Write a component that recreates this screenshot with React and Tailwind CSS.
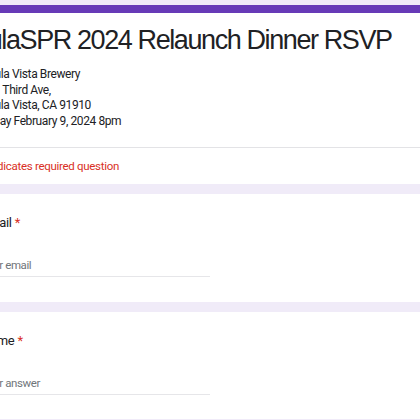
import React from 'react';

const roboto = { fontFamily: 'Roboto, "Noto Sans", sans-serif' };

const Question = ({ label, placeholder, bottom = 'pb-[25px]' }) => (
    <div className={`bg-white pt-[20px] ${bottom}`} style={roboto}>
        <p className="text-[13px] leading-[18px] tracking-[-0.3px] text-[#202124]">
            {label} <span className="text-[#d93025]">*</span>
        </p>
        <div className="mt-[25px] w-[229px] border-b border-[#e6e6e9] pb-[3px]">
            <p className="text-[11.5px] leading-[16px] tracking-[-0.4px] text-[#70757a]">{placeholder}</p>
        </div>
    </div>
);

export default function App() {
    return (
        <div className="h-[420px] w-[420px] overflow-hidden bg-[#f0ebf8] pt-[5px]">
            <div className="-ml-[19px] flex w-[700px] flex-col gap-[10px]">
                {/* header card */}
                <div className="border-t-[8px] border-[#673ab7] bg-white pt-[11px]">
                    <h1
                        className="-ml-[25px] whitespace-nowrap text-[27px] leading-[32px] tracking-[-1.4px] text-[#202124]"
                        style={{ fontFamily: '"Liberation Sans", Arial, sans-serif' }}
                    >
                        ChulaSPR 2024 Relaunch Dinner RSVP
                    </h1>
                    <div className="mt-[11px] text-[12px] leading-[15.5px] tracking-[-0.4px] text-[#202124]" style={roboto}>
                        <p>Chula Vista Brewery</p>
                        <p>271 Third Ave,</p>
                        <p>Chula Vista, CA 91910</p>
                        <p>Friday February 9, 2024 8pm</p>
                    </div>
                    <div className="mt-[18px] h-px bg-[#e3e3e6]" />
                    <p className="py-[10px] text-[11.5px] leading-[16px] tracking-[-0.3px] text-[#d93025]" style={roboto}>
                        * Indicates required question
                    </p>
                </div>

                <Question label="Email" placeholder="Your email" />
                <Question label="Name" placeholder="Your answer" bottom="pb-[24px]" />
            </div>
        </div>
    );
}
